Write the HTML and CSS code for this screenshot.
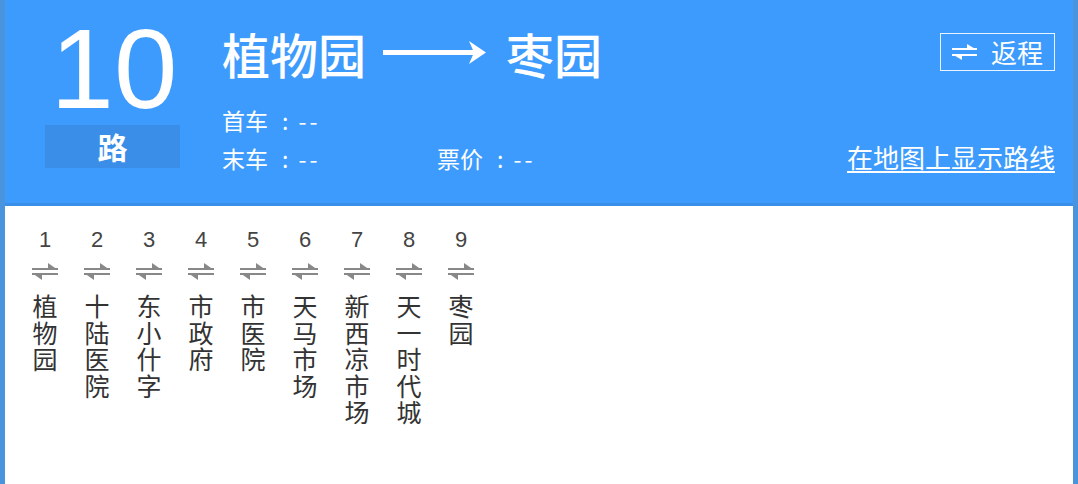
FILE: index.html
```
<!DOCTYPE html>
<html lang="zh-CN">
<head>
<meta charset="utf-8">
<title>10路</title>
<link rel="stylesheet" href="styles.css">
</head>
<body>
<div class="card">
  <header class="head">
    <div class="line-no">
      <div class="num">10</div>
      <div class="lu">路</div>
    </div>
    <div class="info">
      <div class="title">
        <span>植物园</span>
        <svg class="arrow" width="104" height="30" viewBox="0 0 104 30"><rect x="0" y="12" width="92" height="5" fill="#fff"/><polygon points="86,3 103,14.5 86,26 91,14.5" fill="#fff"/></svg>
        <span>枣园</span>
      </div>
      <div class="times">
        <div class="row"><span class="cell">首车<span class="colon">:</span><span class="dash">--</span></span></div>
        <div class="row"><span class="cell">末车<span class="colon">:</span><span class="dash">--</span></span><span class="cell">票价<span class="colon">:</span><span class="dash">--</span></span></div>
      </div>
    </div>
    <div class="actions">
      <a class="back" href="#">
        <svg class="swap" width="25" height="18" viewBox="0 0 25 18"><rect x="0" y="5" width="25" height="2" fill="#fff"/><polygon points="25,7 15,1 15,7" fill="#fff"/><rect x="0" y="11" width="25" height="2" fill="#fff"/><polygon points="0,11 10,17 10,11" fill="#fff"/></svg>
        <span>返程</span>
      </a>
      <a class="maplink" href="#">在地图上显示路线</a>
    </div>
  </header>
  <div class="stations">
    <div class="st"><div class="idx">1</div><svg class="sw" width="26" height="18" viewBox="0 0 26 18"><rect x="0" y="6" width="26" height="2" fill="#888"/><polygon points="26,8 16,1 16,8" fill="#888"/><rect x="0" y="11" width="26" height="2" fill="#888"/><polygon points="0,11 10,18 10,11" fill="#888"/></svg><div class="name">植物园</div></div>
    <div class="st"><div class="idx">2</div><svg class="sw" width="26" height="18" viewBox="0 0 26 18"><rect x="0" y="6" width="26" height="2" fill="#888"/><polygon points="26,8 16,1 16,8" fill="#888"/><rect x="0" y="11" width="26" height="2" fill="#888"/><polygon points="0,11 10,18 10,11" fill="#888"/></svg><div class="name">十陆医院</div></div>
    <div class="st"><div class="idx">3</div><svg class="sw" width="26" height="18" viewBox="0 0 26 18"><rect x="0" y="6" width="26" height="2" fill="#888"/><polygon points="26,8 16,1 16,8" fill="#888"/><rect x="0" y="11" width="26" height="2" fill="#888"/><polygon points="0,11 10,18 10,11" fill="#888"/></svg><div class="name">东小什字</div></div>
    <div class="st"><div class="idx">4</div><svg class="sw" width="26" height="18" viewBox="0 0 26 18"><rect x="0" y="6" width="26" height="2" fill="#888"/><polygon points="26,8 16,1 16,8" fill="#888"/><rect x="0" y="11" width="26" height="2" fill="#888"/><polygon points="0,11 10,18 10,11" fill="#888"/></svg><div class="name">市政府</div></div>
    <div class="st"><div class="idx">5</div><svg class="sw" width="26" height="18" viewBox="0 0 26 18"><rect x="0" y="6" width="26" height="2" fill="#888"/><polygon points="26,8 16,1 16,8" fill="#888"/><rect x="0" y="11" width="26" height="2" fill="#888"/><polygon points="0,11 10,18 10,11" fill="#888"/></svg><div class="name">市医院</div></div>
    <div class="st"><div class="idx">6</div><svg class="sw" width="26" height="18" viewBox="0 0 26 18"><rect x="0" y="6" width="26" height="2" fill="#888"/><polygon points="26,8 16,1 16,8" fill="#888"/><rect x="0" y="11" width="26" height="2" fill="#888"/><polygon points="0,11 10,18 10,11" fill="#888"/></svg><div class="name">天马市场</div></div>
    <div class="st"><div class="idx">7</div><svg class="sw" width="26" height="18" viewBox="0 0 26 18"><rect x="0" y="6" width="26" height="2" fill="#888"/><polygon points="26,8 16,1 16,8" fill="#888"/><rect x="0" y="11" width="26" height="2" fill="#888"/><polygon points="0,11 10,18 10,11" fill="#888"/></svg><div class="name">新西凉市场</div></div>
    <div class="st"><div class="idx">8</div><svg class="sw" width="26" height="18" viewBox="0 0 26 18"><rect x="0" y="6" width="26" height="2" fill="#888"/><polygon points="26,8 16,1 16,8" fill="#888"/><rect x="0" y="11" width="26" height="2" fill="#888"/><polygon points="0,11 10,18 10,11" fill="#888"/></svg><div class="name">天一时代城</div></div>
    <div class="st"><div class="idx">9</div><svg class="sw" width="26" height="18" viewBox="0 0 26 18"><rect x="0" y="6" width="26" height="2" fill="#888"/><polygon points="26,8 16,1 16,8" fill="#888"/><rect x="0" y="11" width="26" height="2" fill="#888"/><polygon points="0,11 10,18 10,11" fill="#888"/></svg><div class="name">枣园</div></div>
  </div>
</div>
</body>
</html>
```
FILE: styles.css
```
* { box-sizing: border-box; }
html, body { margin: 0; padding: 0; background: #fff; }
body { font-family: "Noto Sans CJK SC", "Liberation Sans", sans-serif; }

.card {
  width: 1078px;
  height: 484px;
  overflow: hidden;
  border-left: 5px solid #4a94de;
  border-right: 5px solid #4a94de;
  background: #fff;
}

.head {
  display: flex;
  height: 206px;
  padding-top: 13px;
  background: #3d9bfe;
  border-bottom: 3px solid #3a8fe8;
  color: #fff;
}

.line-no {
  margin-left: 40px;
  width: 135px;
  display: flex;
  flex-direction: column;
}
.num {
  font-family: "Liberation Sans", Arial, sans-serif;
  font-size: 114px;
  line-height: 112px;
  height: 112px;
  text-align: center;
  padding-left: 3px;
}
.lu {
  height: 43px;
  background: #3a8ee8;
  font-size: 30px;
  font-weight: bold;
  line-height: 43px;
  text-align: center;
}

.info {
  margin-left: 42px;
  display: flex;
  flex-direction: column;
}
.title {
  margin-top: 17px;
  display: flex;
  align-items: center;
  gap: 17px;
  font-size: 48px;
  font-weight: 500;
  line-height: 46px;
  height: 46px;
}
.arrow { margin-right: 2px; }

.times {
  margin-top: 25px;
  font-size: 23px;
  line-height: 38px;
}
.row { display: flex; }
.cell { width: 215px; }
.colon { margin: 0 10px 0 14px; }
.dash { letter-spacing: 3px; }

.actions {
  margin-left: auto;
  padding-right: 18px;
  display: flex;
  flex-direction: column;
  align-items: flex-end;
}
.back {
  margin-top: 20px;
  width: 115px;
  height: 38px;
  border: 1px solid #e8f4ff;
  display: flex;
  align-items: center;
  justify-content: center;
  gap: 14px;
  color: #fff;
  text-decoration: none;
  font-size: 26px;
  line-height: 36px;
}
.maplink {
  margin-top: 71px;
  color: #fff;
  font-size: 26px;
  line-height: 30px;
  text-decoration: underline;
  text-underline-offset: 3px;
  text-decoration-thickness: 2px;
}

.stations {
  display: flex;
  padding: 22px 0 0 14px;
}
.st {
  width: 52px;
  display: flex;
  flex-direction: column;
  align-items: center;
}
.idx {
  font-family: "Liberation Sans", Arial, sans-serif;
  font-size: 22px;
  line-height: 24px;
  color: #444;
}
.sw { margin-top: 10px; }
.name {
  margin-top: 12px;
  width: 26px;
  font-size: 25px;
  line-height: 26.5px;
  color: #333;
  text-align: center;
  word-break: break-all;
}
```
